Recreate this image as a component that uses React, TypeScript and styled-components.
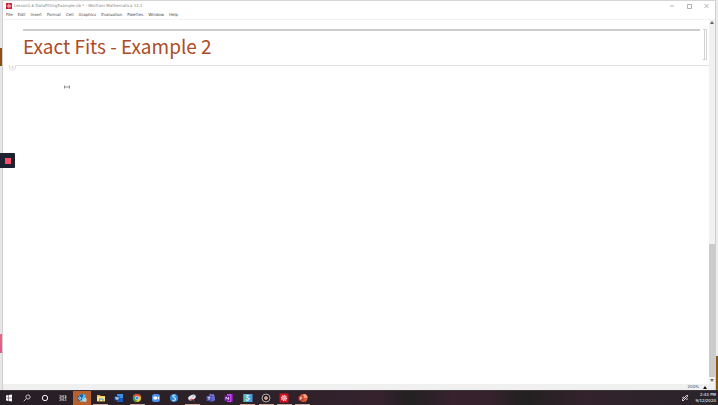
import React from "react";
import styled, { createGlobalStyle } from "styled-components";

const GlobalStyle = createGlobalStyle`
  * { box-sizing: border-box; }
  body { margin: 0; background: #e6e6e6; font-family: "DejaVu Sans", sans-serif; }
  button { font: inherit; color: inherit; background: none; border: 0; padding: 0; margin: 0; }
  svg { display: block; }
`;

const Screen = styled.div`
  height: 100vh;
  display: flex;
  flex-direction: column;
  overflow: hidden;
`;

const Desktop = styled.div`
  flex: 1;
  min-height: 0;
  display: flex;
  position: relative;
`;

const LeftEdge = styled.div`
  width: 3px;
  border-right: 1px solid #d0d0d0;
  background: linear-gradient(#e6e6e6 48px, #8a5410 48px, #8a5410 66px, #e6e6e6 66px, #e6e6e6 334px, #e8697c 334px, #e25592 353px, #e6e6e6 353px);
`;

const RightEdge = styled.div`
  width: 3px;
  border-left: 1px solid #cfcfcf;
  background: linear-gradient(to top, #8a5a12 34px, #ececec 34px);
`;

const Window = styled.div`
  flex: 1;
  min-width: 0;
  display: flex;
  flex-direction: column;
  background: #fff;
  border-top: 1px solid #d6d6d6;
`;

const TitleBar = styled.header`
  height: 10px;
  display: flex;
  align-items: center;
  gap: 2px;
  padding-left: 3px;
`;

const Caption = styled.div`
  flex: 1;
  font-size: 4px;
  line-height: 6px;
  color: #858585;
`;

const Controls = styled.div`
  display: flex;
`;

const ControlButton = styled.button`
  width: 17px;
  height: 9px;
  display: grid;
  place-items: center;
`;

const MenuBar = styled.nav`
  height: 8px;
  display: flex;
  align-items: center;
  gap: 5px;
  padding-left: 3px;
  font-size: 4px;
  line-height: 6px;
  color: #484848;
`;

const Body = styled.div`
  flex: 1;
  min-height: 0;
  display: flex;
`;

const Notebook = styled.main`
  flex: 1;
  min-width: 0;
  border-top: 1px solid #f3f3f3;
`;

const TitleCell = styled.section`
  display: flex;
  justify-content: space-between;
  padding: 9px 2px 0 20px;
  height: 45px;
`;

const CellContent = styled.div`
  flex: 1;
  border-top: 2px solid #cdcdcd;
  margin-right: 3px;
`;

const Heading = styled.h1`
  margin: 0;
  font-family: "Noto Sans CJK SC", "Noto Sans", sans-serif;
  font-size: 19px;
  line-height: 30px;
  font-weight: 400;
  color: #ad4c28;
  white-space: nowrap;
`;

const Brackets = styled.div`
  display: flex;
  height: 31px;
`;

const Bracket = styled.span`
  width: 2px;
  border: 1px solid #d2d2d2;
  border-left: 0;
`;

const InsertRow = styled.div`
  display: flex;
  align-items: flex-start;
  padding-left: 6px;
  height: 16px;
`;

const InsertButton = styled.button`
  width: 7px;
  height: 6px;
`;

const InsertLine = styled.div`
  flex: 1;
  height: 1px;
  background: #e0e0e0;
`;

const TextCursor = styled.svg`
  margin: 4px 0 0 61px;
`;

const ScrollBar = styled.div`
  width: 6px;
  display: flex;
  flex-direction: column;
  background: #f1f1f1;
`;

const ScrollArrow = styled.button`
  height: 7px;
  display: grid;
  place-items: center;
`;

const ScrollTrack = styled.div`
  flex: 1;
  display: flex;
  align-items: flex-end;
`;

const ScrollThumb = styled.div`
  width: 100%;
  height: 38%;
  background: #cbcbcb;
`;

const StatusBar = styled.footer`
  height: 6px;
  display: flex;
  justify-content: flex-end;
  align-items: center;
  background: #f0f0f0;
  padding-right: 8px;
`;

const ZoomButton = styled.button`
  display: flex;
  align-items: center;
  gap: 4px;
  font-size: 4px;
  line-height: 6px;
  color: #2f5379;
`;

const Recorder = styled.button`
  position: absolute;
  left: 0;
  top: 153px;
  width: 15px;
  height: 15px;
  display: grid;
  place-items: center;
  background: #1d2130;
  border-radius: 0 1px 1px 0;
`;

const StopSquare = styled.span`
  width: 6px;
  height: 6px;
  background: #fb4d67;
`;

const TaskBar = styled.footer`
  height: 15px;
  display: flex;
  border-top: 1px solid #383438;
  background: linear-gradient(90deg, #271f26, #30212b 45%, #35222d 53%, #222021 57%, #37222e 63%, #36222d 68%, #222021 73%, #33222b 81%, #29242a);
  color: #fff;
`;

const SystemIcons = styled.div`
  display: grid;
  grid-template-columns: repeat(4, 18px);
  margin-right: 1px;
`;

const AppIcons = styled.div`
  width: 239px;
  display: grid;
  grid-template-columns: repeat(13, 1fr);
`;

const TaskButton = styled.button<{ $running?: boolean; $active?: boolean }>`
  display: grid;
  place-items: center;
  background: ${(p) => (p.$active ? "#b8602b" : "transparent")};
  background-image: ${(p) => (p.$running ? "linear-gradient(#c9a596, #c9a596)" : "none")};
  background-size: 15px 1px;
  background-position: center bottom;
  background-repeat: no-repeat;
`;

const Tray = styled.div`
  margin-left: auto;
  display: flex;
  align-items: center;
  gap: 6px;
  padding-right: 2px;
`;

const Clock = styled.time`
  font-size: 4px;
  line-height: 6px;
  text-align: right;
`;

const ClockLine = styled.span`
  display: block;
`;

const Gear = ({ size }: { size: number }) => (
  <svg width={size} height={size} viewBox="0 0 10 10">
    <rect width="10" height="10" rx="1" fill="#c8182b" />
    <circle cx="5" cy="5" r="3" fill="none" stroke="#fbdfe0" strokeWidth="1.4" strokeDasharray="1.5 .7" />
    <circle cx="5" cy="5" r="1.9" fill="#f2c3c6" />
    <circle cx="5" cy="5" r=".8" fill="#c8182b" />
  </svg>
);

const Glyph = ({ children }: { children: React.ReactNode }) => (
  <svg width="10" height="10" viewBox="0 0 20 20">{children}</svg>
);

const systemIcons = [
  { name: "Start", art: <path d="M4 5l5-.8v5.3H4zM10 4l6-1v6.5h-6zM4 10.500h5v5.300L4 15zM10 10.500h6V17l-6-1z" fill="#fff" /> },
  { name: "Search", art: <g fill="none" stroke="#e5e1e4" strokeWidth="1.600"><circle cx="12" cy="8" r="4.200" /><path d="M9 11l-5.500 5.500" /></g> },
  { name: "Cortana", art: <circle cx="10" cy="10" r="5.400" fill="none" stroke="#fff" strokeWidth="1.900" /> },
  { name: "Task View", art: <g fill="none" stroke="#e5e1e4" strokeWidth="1.300"><path d="M4 4v2h8V4M4 16v-2h8v2M4 8h8v4H4zM15.500 4v12" /><path d="M14.500 8h2" strokeWidth="3" /></g> },
];

const apps = [
  { name: "Outlook", active: true, art: <><path d="M6 3h11v11H6z" fill="#52b7ec" /><path d="M6 3h6v5H6z" fill="#1266b0" /><path d="M6 9l6 4 6-4v8H6z" fill="#9ad8f7" /><path d="M1 6h9v9H1z" fill="#1261a8" /><circle cx="5.500" cy="10.500" r="2.300" fill="none" stroke="#fff" strokeWidth="1.500" /><circle cx="16" cy="14" r="3.500" fill="#d9e7ef" /><path d="M14 14h4" stroke="#2a73a9" /></> },
  { name: "File Explorer", running: true, art: <><path d="M2 4h6l1 2h9v11H2z" fill="#e6b83c" /><path d="M2 7h16v9H2z" fill="#fce38b" /><path d="M6 11h9v5H6z" fill="#4da0cd" /><path d="M8 13h5v3H8z" fill="#fce38b" /></> },
  { name: "Word", art: <><path d="M6 2h12v16H6z" fill="#3b8ddd" /><path d="M6 10h12v8H6z" fill="#185abd" /><path d="M1 6h10v9H1z" fill="#1450a3" /><path d="M3 8l1.500 5L6 8.500 7.500 13 9 8" fill="none" stroke="#fff" strokeWidth="1.300" /></> },
  { name: "Chrome", running: true, art: <><circle cx="10" cy="10" r="8" fill="#f3c623" /><path d="M10 10L3 6a8 8 0 0 1 14 0z" fill="#df4638" /><path d="M10 10L3 6a8 8 0 0 0 6 12z" fill="#2ba052" /><circle cx="10" cy="10" r="4" fill="#fff" /><circle cx="10" cy="10" r="3" fill="#3e82e8" /></> },
  { name: "Zoom", art: <><rect x="2" y="2" width="16" height="16" rx="5" fill="#4a91ee" /><rect x="5" y="7" width="7" height="6" rx="1.500" fill="#fff" /><path d="M13 9l3-2v6l-3-2z" fill="#fff" /></> },
  { name: "Snagit", art: <><circle cx="10" cy="10" r="8" fill="#3387cf" /><path d="M13 5c-3-2-6 0-5 2s5 2 5 5-4 4-6 2" fill="none" stroke="#b7e5ff" strokeWidth="2.500" /></> },
  { name: "Snipping Tool", running: true, art: <><ellipse cx="10" cy="9" rx="8" ry="5" fill="#e6e8ee" transform="rotate(-25 10 9)" /><path d="M10 9L16 3" stroke="#718398" strokeWidth="1.200" /><path d="M4 15l6-3 5 5" fill="none" stroke="#d22d35" strokeWidth="1.800" /></> },
  { name: "Teams", art: <><circle cx="14" cy="5" r="2.500" fill="#8589e3" /><circle cx="9" cy="4" r="2.500" fill="#7176d9" /><path d="M6 7h12v6q0 4-5 4H8z" fill="#6468cd" /><path d="M1 6h10v10H1z" fill="#464eb8" /><path d="M3 8.500h6M6 8.500V14" stroke="#fff" strokeWidth="1.500" /></> },
  { name: "OneNote", art: <><path d="M6 2h12v16H6z" fill="#c64ae5" /><path d="M15 2h3v16h-3z" fill="#7719aa" /><path d="M1 5h11v11H1z" fill="#7b1db0" /><path d="M4 13V8l5 5V8" fill="none" stroke="#fff" strokeWidth="1.400" /></> },
  { name: "Screen Editor", running: true, art: <><path d="M1 2h18v16H1z" fill="#4a9fe0" /><path d="M1 2h9v16H1z" fill="#58bdb8" /><path d="M13 6c-3-2-7-1-5 2s6 2 4 5-5 1-6 0" fill="none" stroke="#e7fbff" strokeWidth="2.200" /></> },
  { name: "Recorder", running: true, art: <><circle cx="10" cy="10" r="8" fill="#211d20" stroke="#c9c4c7" strokeWidth="1.700" /><circle cx="10" cy="10" r="3" fill="#eb8b67" stroke="#fff" /></> },
  { name: "Mathematica", running: true, art: <><rect x="1" y="1" width="18" height="18" rx="2" fill="#d51220" /><circle cx="10" cy="10" r="5" fill="none" stroke="#ffe6e5" strokeWidth="2.400" strokeDasharray="2.400 1.300" /><circle cx="10" cy="10" r="3.500" fill="#fff" /><circle cx="10" cy="10" r="1.500" fill="#d51220" /></> },
  { name: "PowerPoint", running: true, art: <><circle cx="11" cy="10" r="8" fill="#dc593b" /><path d="M11 2a8 8 0 0 1 8 8h-8z" fill="#ff9d7d" /><path d="M1 6h10v9H1z" fill="#bd3521" /><path d="M4.500 14V8h2a1.700 1.700 0 0 1 0 3.500h-2" fill="none" stroke="#fff" strokeWidth="1.300" /></> },
];

const menus = ["File", "Edit", "Insert", "Format", "Cell", "Graphics", "Evaluation", "Palettes", "Window", "Help"];

const windowControls = [
  { name: "Minimize", d: "M0 3h4" },
  { name: "Maximize", d: "M.5 1.500h4v4h-4z" },
  { name: "Close", d: "M.5 1l4 4M4.500 1l-4 4" },
];

export default function App() {
  return (
    <Screen>
      <GlobalStyle />
      <Desktop>
        <LeftEdge />
        <Window>
          <TitleBar>
            <Gear size={6} />
            <Caption>Lesson1.6.DataFittingExample.nb * - Wolfram Mathematica 12.1</Caption>
            <Controls>
              {windowControls.map((c) => (
                <ControlButton key={c.name} aria-label={c.name}>
                  <svg width="5" height="6" fill="none" stroke="#a0a0a0" strokeWidth=".8"><path d={c.d} /></svg>
                </ControlButton>
              ))}
            </Controls>
          </TitleBar>
          <MenuBar>
            {menus.map((m) => <button key={m}>{m}</button>)}
          </MenuBar>
          <Body>
            <Notebook>
              <TitleCell>
                <CellContent>
                  <Heading>Exact Fits - Example 2</Heading>
                </CellContent>
                <Brackets><Bracket /><Bracket /></Brackets>
              </TitleCell>
              <InsertRow>
                <InsertButton aria-label="Insert cell">
                  <svg width="7" height="6" fill="none" stroke="#cfcfcf" strokeWidth=".7"><path d="M.5 0v2q0 3 3 3t3-3V0M2 2h3M3.500 .5v3" /></svg>
                </InsertButton>
                <InsertLine />
              </InsertRow>
              <TextCursor width="6" height="4" fill="none" stroke="#777" strokeWidth=".8">
                <path d="M.5 .5v3M5.500 .5v3M.5 2h5" />
              </TextCursor>
            </Notebook>
            <ScrollBar>
              <ScrollArrow aria-label="Scroll up"><svg width="4" height="3"><path d="M0 3l2-3 2 3z" fill="#646464" /></svg></ScrollArrow>
              <ScrollTrack><ScrollThumb /></ScrollTrack>
              <ScrollArrow aria-label="Scroll down"><svg width="4" height="3"><path d="M0 0l2 3 2-3z" fill="#707070" /></svg></ScrollArrow>
            </ScrollBar>
          </Body>
          <StatusBar>
            <ZoomButton>200%<svg width="4" height="3"><path d="M0 3l2-3 2 3z" fill="#111" /></svg></ZoomButton>
          </StatusBar>
        </Window>
        <RightEdge />
        <Recorder aria-label="Stop recording"><StopSquare /></Recorder>
      </Desktop>
      <TaskBar>
        <SystemIcons>
          {systemIcons.map((i) => <TaskButton key={i.name} aria-label={i.name}><Glyph>{i.art}</Glyph></TaskButton>)}
        </SystemIcons>
        <AppIcons>
          {apps.map((a) => (
            <TaskButton key={a.name} aria-label={a.name} $running={a.running} $active={a.active}><Glyph>{a.art}</Glyph></TaskButton>
          ))}
        </AppIcons>
        <Tray>
          <svg width="8" height="8" fill="none" stroke="#ddd8dc" strokeWidth=".9"><path d="M1 6l5-5 1 1-5 5zM1 4q2-2 3 0t3 1" /></svg>
          <Clock><ClockLine>2:43 PM</ClockLine><ClockLine>9/12/2020</ClockLine></Clock>
        </Tray>
      </TaskBar>
    </Screen>
  );
}
